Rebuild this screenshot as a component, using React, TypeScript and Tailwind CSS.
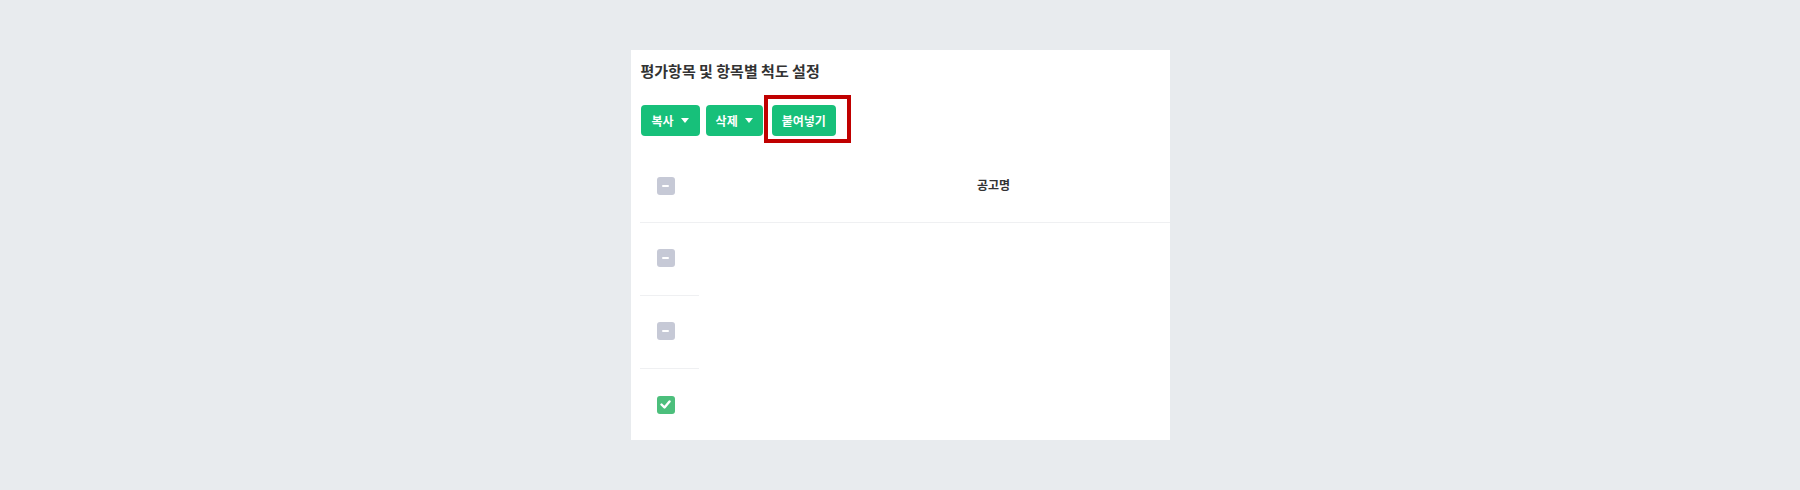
import React from 'react';

const font = { fontFamily: '"Noto Sans CJK KR", "Noto Sans", sans-serif' };

const Caret = () => (
  <svg width="8" height="5" viewBox="0 0 8 5" className="ml-[7px]">
    <path d="M0 0h8L4 5z" fill="#fff" />
  </svg>
);

const Box: React.FC<{ checked?: boolean }> = ({ checked }) =>
  checked ? (
    <span className="w-[18px] h-[18px] rounded-[3px] bg-[#4cbf7c] flex items-center justify-center">
      <svg width="11" height="9" viewBox="0 0 11 9">
        <path d="M1.5 4.5l3 3 5-6" stroke="#fff" strokeWidth="2.4" fill="none" strokeLinecap="round" strokeLinejoin="round" />
      </svg>
    </span>
  ) : (
    <span className="w-[18px] h-[18px] rounded-[3px] bg-[#c6c9d6] flex items-center justify-center">
      <span className="w-[7px] h-[2px] bg-white rounded-full" />
    </span>
  );

const App: React.FC = () => {
  const rows = [false, false, true];

  return (
    <div className="w-full h-[490px] bg-[#e8ebee] pt-[50px]" style={font}>
      <div className="relative w-[539px] h-[390px] mx-auto bg-white overflow-hidden pl-[9px] pt-[10px]">
        <h2 className="ml-px text-[15px] leading-[22px] font-bold text-[#333]">평가항목 및 항목별 척도 설정</h2>

        <div className="flex mt-[23px] ml-px h-[31px]">
          <button className="h-full px-[11px] rounded-[4px] bg-[#17c07a] text-white text-[12px] font-bold flex items-center">
            복사<Caret />
          </button>
          <button className="ml-[6px] h-full px-[10px] rounded-[4px] bg-[#17c07a] text-white text-[12px] font-bold flex items-center">
            삭제<Caret />
          </button>
          <button className="ml-[9px] h-full px-[10px] rounded-[4px] bg-[#17c07a] text-white text-[12px] font-bold flex items-center">
            붙여넣기
          </button>
        </div>

        <div className="absolute left-[133px] top-[45px] w-[87px] h-[48px] border-[4px] border-[#c00000]" />

        <div className="mt-[12px] w-[649px]">
          <div className="flex h-[75px] border-b border-[#eff0f2]">
            <div className="w-[59px] flex items-center pl-[17px] pt-px">
              <Box />
            </div>
            <div className="w-[590px] flex items-center justify-center text-[12px] font-bold text-[#333]">공고명</div>
          </div>
          {rows.map((checked, i) => (
            <div key={i} className="flex h-[73px]">
              <div className={`w-[59px] flex items-center pl-[17px] pb-[2px] ${i < rows.length - 1 ? 'border-b border-[#eff0f2]' : ''}`}>
                <Box checked={checked} />
              </div>
              <div className="w-[590px]" />
            </div>
          ))}
        </div>
      </div>
    </div>
  );
};

export default App;
